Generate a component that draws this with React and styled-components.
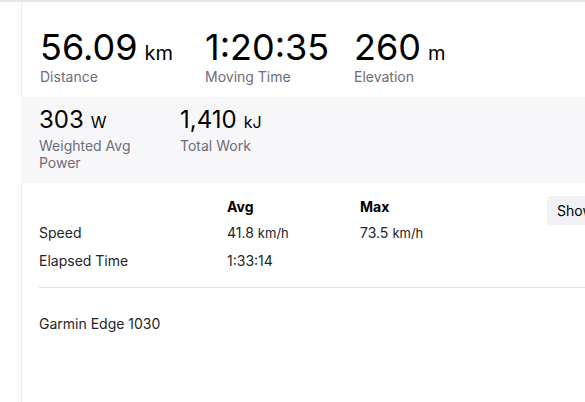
import React from "react";
import { styled, createGlobalStyle } from "styled-components";

const GlobalStyle = createGlobalStyle`
  html, body {
    margin: 0;
    padding: 0;
    background: #ffffff;
    overflow: hidden;
  }
  body {
    font-family: Inter, "Liberation Sans", sans-serif;
    color: #242428;
  }
`;

const primaryStats = [
  { value: "56.09", unit: "km", label: "Distance", width: 165 },
  { value: "1:20:35", unit: "", label: "Moving Time", width: 149 },
  { value: "260", unit: "m", label: "Elevation", width: 149 },
];

const secondaryStats = [
  { value: "303", unit: "W", label: "Weighted Avg Power", width: 141 },
  { value: "1,410", unit: "kJ", label: "Total Work", width: 141 },
];

const rows = [
  { label: "Speed", avg: "41.8", avgUnit: "km/h", max: "73.5", maxUnit: "km/h" },
  { label: "Elapsed Time", avg: "1:33:14", avgUnit: "", max: "", maxUnit: "" },
];

function App() {
  return (
    <>
      <GlobalStyle />
      <Page>
        <Gutter />
        <Main>
          <PrimarySection>
            {primaryStats.map((s) => (
              <Stat key={s.label} $width={s.width}>
                <BigValue>
                  {s.value}
                  {s.unit && <BigUnit>{s.unit}</BigUnit>}
                </BigValue>
                <Label>{s.label}</Label>
              </Stat>
            ))}
          </PrimarySection>
          <SecondarySection>
            {secondaryStats.map((s) => (
              <Stat key={s.label} $width={s.width}>
                <MidValue>
                  {s.value}
                  <MidUnit>{s.unit}</MidUnit>
                </MidValue>
                <SmallLabel>{s.label}</SmallLabel>
              </Stat>
            ))}
          </SecondarySection>
          <DetailsSection>
            <TableRow>
              <Table>
                <HeadCell />
                <HeadCell>Avg</HeadCell>
                <HeadCell>Max</HeadCell>
                {rows.map((r) => (
                  <React.Fragment key={r.label}>
                    <Cell>{r.label}</Cell>
                    <Cell>
                      {r.avg}
                      {r.avgUnit && <CellUnit>{r.avgUnit}</CellUnit>}
                    </Cell>
                    <Cell>
                      {r.max}
                      {r.maxUnit && <CellUnit>{r.maxUnit}</CellUnit>}
                    </Cell>
                  </React.Fragment>
                ))}
              </Table>
              <ShowButton>Show More</ShowButton>
            </TableRow>
            <Divider />
            <Device>Garmin Edge 1030</Device>
          </DetailsSection>
        </Main>
      </Page>
    </>
  );
}

export default App;

const Page = styled.div`
  display: flex;
  width: 585px;
  height: 402px;
  border-top: 2px solid #e6e6eb;
  box-sizing: border-box;
`;

const Gutter = styled.div`
  width: 21px;
  flex-shrink: 0;
`;

const Main = styled.div`
  flex: 1;
  display: flex;
  flex-direction: column;
  min-width: 0;
`;

const PrimarySection = styled.div`
  display: flex;
  height: 95px;
  box-sizing: border-box;
  padding: 27px 0 0 18px;
  border-left: 1px solid #ececef;
`;

const Stat = styled.div`
  width: ${(p) => p.$width}px;
  flex-shrink: 0;
  display: flex;
  flex-direction: column;
`;

const BigValue = styled.div`
  font-size: 36px;
  line-height: 36px;
  color: #000000;
  white-space: nowrap;
`;

const BigUnit = styled.span`
  font-size: 20px;
  line-height: 1;
  margin-left: 7px;
`;

const Label = styled.div`
  font-size: 14px;
  line-height: 18px;
  color: #6d6d78;
  margin-top: 3px;
`;

const SecondarySection = styled.div`
  display: flex;
  height: 86px;
  box-sizing: border-box;
  padding: 10px 0 0 18px;
  background: #f7f7fa;
`;

const MidValue = styled.div`
  font-size: 24px;
  line-height: 26px;
  color: #000000;
  white-space: nowrap;
`;

const MidUnit = styled.span`
  font-size: 16px;
  line-height: 1;
  margin-left: 7px;
`;

const SmallLabel = styled.div`
  font-size: 14px;
  line-height: 17px;
  color: #6d6d78;
  width: 105px;
  margin-top: 4px;
`;

const DetailsSection = styled.div`
  flex: 1;
  border-left: 1px solid #ececef;
  padding: 14px 0 0 17px;
`;

const TableRow = styled.div`
  display: flex;
  align-items: flex-start;
  white-space: nowrap;
`;

const Table = styled.div`
  display: grid;
  grid-template-columns: 188px 133px 187px;
  grid-auto-rows: 28px;
  font-size: 14px;
  color: #242428;
`;

const HeadCell = styled.div`
  font-weight: 700;
  line-height: 20px;
  color: #000000;
`;

const Cell = styled.div`
  line-height: 20px;
  margin-top: -2px;
`;

const CellUnit = styled.span`
  font-size: 13px;
  margin-left: 4px;
`;

const ShowButton = styled.button`
  flex-shrink: 0;
  height: 29px;
  margin-top: -1px;
  padding: 0 10px;
  border: none;
  border-radius: 4px;
  background: #f0f0f5;
  font-family: Inter, "Liberation Sans", sans-serif;
  font-size: 14px;
  color: #000000;
`;

const Divider = styled.div`
  height: 1px;
  background: #dfdfe8;
  margin-top: 6px;
`;

const Device = styled.div`
  margin-top: 27px;
  font-size: 14px;
  line-height: 18px;
  color: #242428;
`;
